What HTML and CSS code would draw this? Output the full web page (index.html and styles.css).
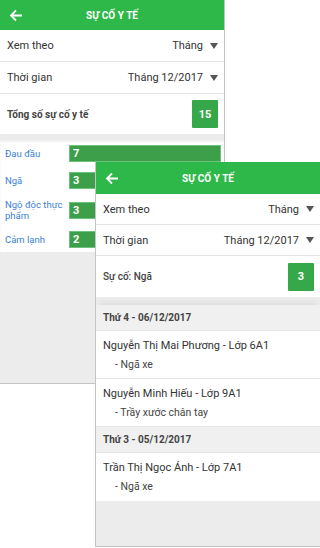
FILE: index.html
```html
<!DOCTYPE html>
<html>
  <head>
    <title>Sự cố y tế</title>
    <meta name="viewport" content="width=device-width, initial-scale=1">
    <link rel="stylesheet" href="styles.css">
  </head>
  <body>
    <div class="screen screen-back">
      <div class="appbar">
        <svg class="back" width="14" height="13" viewBox="0 0 14 13"><path d="M13 6.5H2M7 1.5L2 6.5L7 11.5" fill="none" stroke="#fff" stroke-width="1.8"/></svg>
        <span class="title">SỰ CỐ Y TẾ</span>
      </div>
      <div class="row"><span>Xem theo</span><span class="select">Tháng<i class="caret"></i></span></div>
      <div class="row"><span>Thời gian</span><span class="select">Tháng 12/2017<i class="caret"></i></span></div>
      <div class="row row-total"><span class="total-label">Tổng số sự cố y tế</span><span class="badge">15</span></div>
      <div class="chart">
        <div class="bar-row"><span class="bar-label">Đau đầu</span><div class="track"><div class="bar" style="width:100%">7</div></div></div>
        <div class="bar-row"><span class="bar-label">Ngã</span><div class="track"><div class="bar" style="width:42.9%">3</div></div></div>
        <div class="bar-row"><span class="bar-label">Ngộ độc thực phẩm</span><div class="track"><div class="bar" style="width:42.9%">3</div></div></div>
        <div class="bar-row"><span class="bar-label">Cảm lạnh</span><div class="track"><div class="bar" style="width:28.6%">2</div></div></div>
      </div>
    </div>

    <div class="screen screen-front">
      <div class="appbar">
        <svg class="back" width="14" height="13" viewBox="0 0 14 13"><path d="M13 6.5H2M7 1.5L2 6.5L7 11.5" fill="none" stroke="#fff" stroke-width="1.8"/></svg>
        <span class="title">SỰ CỐ Y TẾ</span>
      </div>
      <div class="row"><span>Xem theo</span><span class="select">Tháng<i class="caret"></i></span></div>
      <div class="row"><span>Thời gian</span><span class="select">Tháng 12/2017<i class="caret"></i></span></div>
      <div class="row row-total"><span class="total-label">Sự cố: Ngã</span><span class="badge">3</span></div>
      <div class="list">
        <div class="day first">Thứ 4 - 06/12/2017</div>
        <div class="item">
          <div class="name">Nguyễn Thị Mai Phương - Lớp 6A1</div>
          <div class="note">- Ngã xe</div>
        </div>
        <div class="item">
          <div class="name">Nguyễn Minh Hiếu - Lớp 9A1</div>
          <div class="note">- Trầy xước chân tay</div>
        </div>
        <div class="day">Thứ 3 - 05/12/2017</div>
        <div class="item last">
          <div class="name">Trần Thị Ngọc Ánh - Lớp 7A1</div>
          <div class="note">- Ngã xe</div>
        </div>
      </div>
    </div>
  </body>
</html>
```

FILE: styles.css
```css
body {
  margin: 0;
  width: 320px;
  height: 548px;
  position: relative;
  background: #fff;
  font-family: Roboto, "Noto Sans", sans-serif;
  color: #333;
  overflow: hidden;
}
.screen {
  position: absolute;
  width: 225px;
  display: flex;
  flex-direction: column;
  background: #ececec;
  box-sizing: border-box;
}
.screen-back {
  left: 0;
  top: 0;
  height: 384px;
  border-right: 1px solid #c4c4c4;
  border-bottom: 1px solid #c4c4c4;
}
.screen-front {
  left: 95px;
  top: 162px;
  height: 385px;
  border-left: 1px solid #c4c4c4;
  border-bottom: 1px solid #c4c4c4;
}
.appbar {
  height: 30px;
  background: #2fb84a;
  display: grid;
  grid-template-columns: 30px 1fr 30px;
  align-items: center;
  color: #fff;
  flex-shrink: 0;
}
.screen-front .appbar {
  height: 32px;
}
.back {
  margin-left: 9px;
}
.title {
  text-align: center;
  font-size: 10px;
  font-weight: bold;
}
.row {
  height: 31px;
  display: flex;
  align-items: center;
  justify-content: space-between;
  padding: 0 6px 0 7px;
  background: #fff;
  border-bottom: 1px solid #e4e4e4;
  font-size: 11px;
  flex-shrink: 0;
}
.screen-front .row {
  height: 30px;
}
.select {
  display: flex;
  align-items: center;
  gap: 4px;
}
.caret {
  width: 0;
  height: 0;
  border-left: 4.5px solid transparent;
  border-right: 4.5px solid transparent;
  border-top: 6px solid #555;
  margin-left: 3px;
}
.row-total,
.screen-front .row-total {
  height: 40px;
  border-bottom: none;
}
.screen-front .row-total {
  height: 41px;
}
.total-label {
  font-size: 10px;
  font-weight: bold;
  color: #444;
}
.screen-front .total-label {
  font-weight: 500;
}
.badge {
  min-width: 26px;
  height: 28px;
  padding: 0 3px;
  box-sizing: border-box;
  background: #37a84a;
  color: #fff;
  font-size: 11px;
  font-weight: bold;
  display: flex;
  align-items: center;
  justify-content: center;
  border-radius: 1px;
}
.chart {
  margin-top: 6px;
  background: #fff;
  padding: 5px 3px 4px 5px;
  display: flex;
  flex-direction: column;
  gap: 10px;
  box-shadow: inset 0 2px 2px rgba(0, 0, 0, 0.06);
}
.bar-row {
  display: grid;
  grid-template-columns: 64px 1fr;
  align-items: center;
  min-height: 17px;
}
.bar-label {
  font-size: 9.5px;
  line-height: 11px;
  color: #3b7fd4;
}
.bar {
  height: 17px;
  box-sizing: border-box;
  background: #3d9f49;
  border: 1px solid #6cc27a;
  color: #fff;
  font-size: 11px;
  font-weight: bold;
  line-height: 15px;
  padding-left: 3px;
}
.list {
  display: flex;
  flex-direction: column;
}
.day {
  height: 25px;
  display: flex;
  align-items: center;
  padding-left: 7px;
  background: #f0f0f0;
  font-size: 10px;
  font-weight: bold;
  color: #444;
  border-bottom: 1px solid #e4e4e4;
}
.day.first {
  margin-top: 8px;
  box-shadow: 0 -6px 6px -4px rgba(0, 0, 0, 0.08);
}
.item {
  height: 48px;
  background: #fff;
  padding-left: 7px;
  border-bottom: 1px solid #e4e4e4;
  box-sizing: border-box;
  display: flex;
  flex-direction: column;
  justify-content: center;
  gap: 6px;
}
.item.last {
  border-bottom: none;
}
.name {
  font-size: 11px;
}
.note {
  font-size: 10.5px;
  padding-left: 12px;
  color: #444;
}
```
